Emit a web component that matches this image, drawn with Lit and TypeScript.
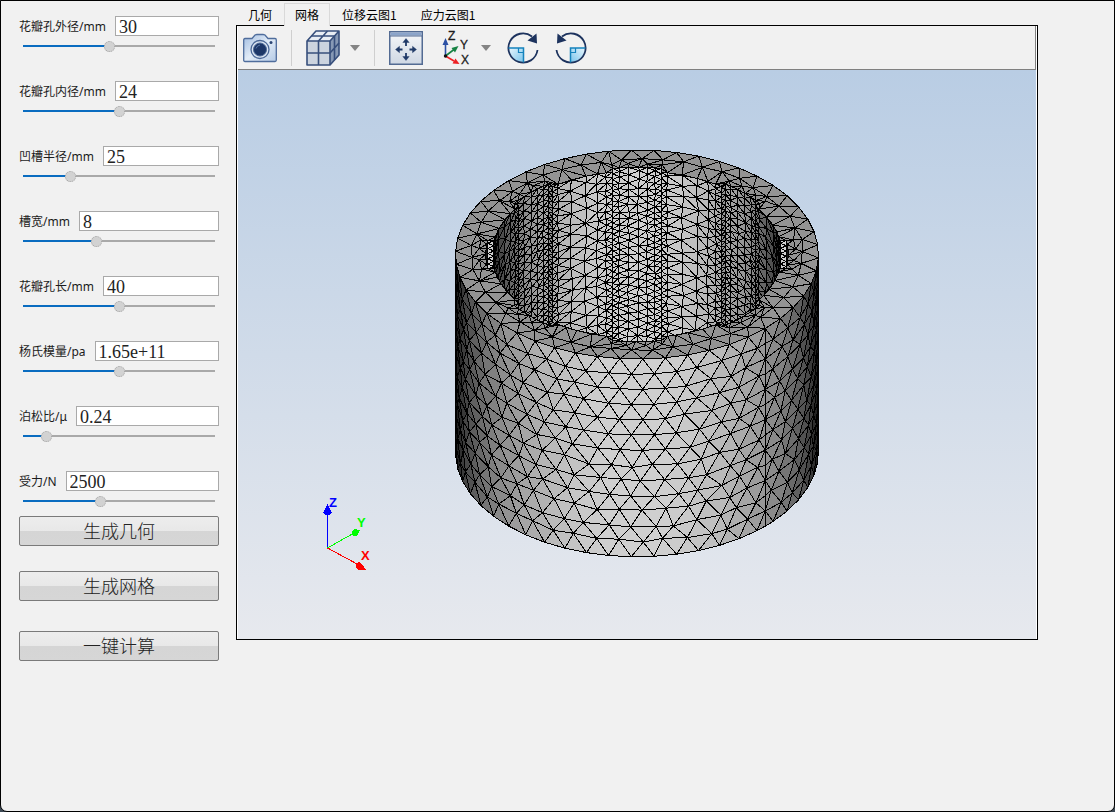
import { LitElement, html, svg, css } from "lit";
import { customElement, property, state } from "lit/decorators.js";
import { styleMap } from "lit/directives/style-map.js";

/* ---------- geometry of the meshed sleeve ---------- */

type Pt = [number, number];
type Tri = [number, number, number];

const UNIT = 6.05;
const TILT = 0.576;
const RISE = 0.817;
const CX = 637;
const CY = 254.5;
const OUTER = 30;
const INNER = 24;
const GROOVE = 25;
const HALF = 4;
const HEIGHT = 40;
const DEG = Math.PI / 180;

function randomSource(seed: number) {
  let s = seed;
  return () => {
    s = (s * 1664525 + 1013904223) % 4294967296;
    return s / 4294967296 - 0.5;
  };
}

function project(x: number, y: number, depth: number): Pt {
  return [CX + UNIT * x, CY - UNIT * TILT * y + UNIT * RISE * depth];
}

/* Bowyer-Watson triangulation; a tiny perturbation avoids cocircular ties. */
function triangulate(src: Pt[]): Tri[] {
  const rnd = randomSource(77);
  const p: Pt[] = src.map(([x, y]) => [x + rnd() * 0.002, y + rnd() * 0.002]);
  const n = p.length;
  p.push([-4000, -4000], [4000, -4000], [0, 6000]);
  type Cell = { t: Tri; x: number; y: number; r: number };
  const cell = (a: number, b: number, c: number): Cell => {
    const [ax, ay] = p[a];
    const bx = p[b][0] - ax, by = p[b][1] - ay;
    const cx = p[c][0] - ax, cy = p[c][1] - ay;
    const d = 2 * (bx * cy - by * cx) || 1e-12;
    const ux = (cy * (bx * bx + by * by) - by * (cx * cx + cy * cy)) / d;
    const uy = (bx * (cx * cx + cy * cy) - cx * (bx * bx + by * by)) / d;
    return { t: [a, b, c], x: ax + ux, y: ay + uy, r: ux * ux + uy * uy };
  };
  let cells: Cell[] = [cell(n, n + 1, n + 2)];
  for (let i = 0; i < n; i++) {
    const [x, y] = p[i];
    const edges = new Map<string, [number, number] | null>();
    const keep: Cell[] = [];
    for (const c of cells) {
      const dx = c.x - x, dy = c.y - y;
      if (dx * dx + dy * dy >= c.r) {
        keep.push(c);
        continue;
      }
      for (const [a, b] of [[c.t[0], c.t[1]], [c.t[1], c.t[2]], [c.t[2], c.t[0]]]) {
        const key = a < b ? `${a}_${b}` : `${b}_${a}`;
        edges.set(key, edges.has(key) ? null : [a, b]);
      }
    }
    for (const e of edges.values()) if (e) keep.push(cell(e[0], e[1], i));
    cells = keep;
  }
  return cells
    .map((c) => c.t)
    .filter(([a, b, c]) => {
      if (a >= n || b >= n || c >= n) return false;
      const area = (src[b][0] - src[a][0]) * (src[c][1] - src[a][1]) -
        (src[b][1] - src[a][1]) * (src[c][0] - src[a][0]);
      return Math.abs(area) > 0.02;
    });
}

const trianglePath = (q: Pt[]) =>
  "M" + q.map(([x, y]) => `${x.toFixed(1)} ${y.toFixed(1)}`).join("L") + "Z";

interface Face { d: string; fill: string }

function grey(v: number) {
  const g = Math.max(0, Math.min(255, Math.round(v / 3) * 3));
  return `rgb(${g},${g},${g})`;
}

function gather(list: { q: Pt[]; shade: number }[]): Face[] {
  const map = new Map<string, string>();
  for (const { q, shade } of list) {
    const key = grey(shade);
    map.set(key, (map.get(key) ?? "") + trianglePath(q));
  }
  return [...map].map(([fill, d]) => ({ fill, d }));
}

/* Graded stations along a length: fine at both ends, coarse in the middle. */
function stations(length: number, fine: number, coarse: number): number[] {
  const out = [0];
  let s = 0;
  for (;;) {
    const edge = Math.min(s, length - s) / (length / 2);
    s += fine + (coarse - fine) * Math.max(0, edge);
    if (s >= length - fine * 0.4) break;
    out.push(s);
  }
  out.push(length);
  const last = out[out.length - 2];
  const stretch = (length - fine) / last;
  return out.map((v, i) => (i < out.length - 1 && out.length > 3 ? v * stretch : v));
}

interface Strip {
  length: number;
  at: (s: number) => Pt;
  normal: (s: number) => Pt;
  fine: number;
  coarse: number;
}

function innerStrips(): Strip[] {
  const strips: Strip[] = [];
  const aIn = Math.asin(HALF / INNER);
  const aOut = Math.asin(HALF / GROOVE);
  const arc = (r: number, from: number, to: number, fine: number, coarse: number): Strip => ({
    length: r * (to - from),
    at: (s) => [r * Math.cos(from + s / r), r * Math.sin(from + s / r)],
    normal: (s) => [-Math.cos(from + s / r), -Math.sin(from + s / r)],
    fine,
    coarse,
  });
  const wall = (a: Pt, b: Pt, nrm: Pt): Strip => {
    const length = Math.hypot(b[0] - a[0], b[1] - a[1]);
    return {
      length,
      at: (s) => [a[0] + ((b[0] - a[0]) * s) / length, a[1] + ((b[1] - a[1]) * s) / length],
      normal: () => nrm,
      fine: 1,
      coarse: 1,
    };
  };
  const polar = (r: number, a: number): Pt => [r * Math.cos(a), r * Math.sin(a)];
  for (let k = 0; k < 8; k++) {
    const m = k * 45 * DEG;
    strips.push(wall(polar(INNER, m - aIn), polar(GROOVE, m - aOut), [-Math.sin(m), Math.cos(m)]));
    strips.push(arc(GROOVE, m - aOut, m + aOut, 1.05, 1.7));
    strips.push(wall(polar(GROOVE, m + aOut), polar(INNER, m + aIn), [Math.sin(m), -Math.cos(m)]));
    strips.push(arc(INNER, m + aIn, m + 45 * DEG - aIn, 1.05, 2.9));
  }
  return strips;
}

function buildInner(strips: Strip[]): Face[] {
  const rnd = randomSource(11);
  const sorted = strips
    .map((st) => ({ st, y: st.at(st.length / 2)[1] }))
    .sort((a, b) => b.y - a.y);
  const faces: Face[] = [];
  for (const { st } of sorted) {
    if (st.normal(st.length / 2)[1] > -0.01 && st.at(st.length / 2)[1] < 5) continue;
    const cols = stations(st.length, st.fine, st.coarse);
    const pts: Pt[] = [];
    cols.forEach((s, i) => {
      const edge = i === 0 || i === cols.length - 1;
      const gap = edge
        ? st.fine * 1.05
        : st.fine + (st.coarse - st.fine) * Math.min(s, st.length - s) / (st.length / 2);
      const rows = Math.round(HEIGHT / gap);
      const shift = i % 2 ? 0.5 : 0;
      for (let r = 0; r <= rows + (shift ? 1 : 0); r++) {
        let z = ((r - shift) * HEIGHT) / rows;
        z = Math.max(0, Math.min(HEIGHT, z));
        const inside = !edge && z > 0 && z < HEIGHT;
        pts.push([s + (inside ? rnd() * gap * 0.22 : 0), z + (inside ? rnd() * gap * 0.22 : 0)]);
      }
    });
    const list: { q: Pt[]; shade: number }[] = [];
    for (const t of triangulate(pts)) {
      const s = (pts[t[0]][0] + pts[t[1]][0] + pts[t[2]][0]) / 3;
      const facing = -st.normal(s)[1] * RISE;
      if (facing <= 0) continue;
      list.push({
        q: t.map((i) => project(...st.at(pts[i][0]), pts[i][1])) as Pt[],
        shade: 255 * facing,
      });
    }
    faces.push(...gather(list));
  }
  return faces;
}

function buildOuter(): Face[] {
  const rnd = randomSource(5);
  const rows = 13;
  const step = 7.2 * DEG;
  const list: { q: Pt[]; shade: number }[] = [];
  const seam = 315 * DEG;
  for (const [dir, count] of [[-1, 20], [1, 8]]) {
    const pts: Pt[] = [];
    for (let r = 0; r <= rows; r++) {
      const z = (r * HEIGHT) / rows;
      const half = r % 2 ? 0.5 : 0;
      if (half) pts.push([0, z]);
      for (let c = 0; c <= count; c++) {
        const u = c + half;
        const inner = r > 0 && r < rows && u > 0;
        const centre = dir < 0 && Math.abs(u - 6.2) < 2.2 && r < 7;
        const j = inner ? (centre ? 0.03 : 0.3) : 0;
        pts.push([(u + rnd() * j) * 3.77, z + rnd() * j * 3]);
      }
    }
    for (const t of triangulate(pts)) {
      const ang = (i: number) => seam + dir * (pts[i][0] / 3.77) * step;
      const mid = (ang(t[0]) + ang(t[1]) + ang(t[2])) / 3;
      const facing = -Math.sin(mid) * RISE;
      if (facing <= 0) continue;
      list.push({
        q: t.map((i) => project(OUTER * Math.cos(ang(i)), OUTER * Math.sin(ang(i)), pts[i][1])) as Pt[],
        shade: 255 * facing,
      });
    }
  }
  return gather(list);
}

function buildRing(strips: Strip[]): Face[] {
  const rnd = randomSource(21);
  const pts: Pt[] = [];
  for (let i = 0; i < 50; i++) {
    const a = (315 + i * 7.2) * DEG;
    pts.push([OUTER * Math.cos(a), OUTER * Math.sin(a)]);
    const b = a + 3.6 * DEG;
    const r = 27.4 + rnd() * 0.7;
    pts.push([r * Math.cos(b), r * Math.sin(b)]);
  }
  strips.forEach((st) => {
    const cols = stations(st.length, st.fine, st.coarse);
    for (let i = 0; i < cols.length - 1; i++) {
      const [x, y] = st.at(cols[i]);
      pts.push([x, y]);
      const bend = Math.abs(Math.hypot(x, y) - GROOVE) < 0.01;
      if (bend && i % 2 === 0) {
        const k = (GROOVE + 1.1 + rnd() * 0.3) / GROOVE;
        pts.push([x * k, y * k]);
      }
    }
  });
  const aOut = Math.asin(HALF / GROOVE) / DEG;
  const list: { q: Pt[]; shade: number }[] = [];
  for (const t of triangulate(pts)) {
    const x = (pts[t[0]][0] + pts[t[1]][0] + pts[t[2]][0]) / 3;
    const y = (pts[t[0]][1] + pts[t[1]][1] + pts[t[2]][1]) / 3;
    const a = ((Math.atan2(y, x) / DEG + 360 + 22.5) % 45) - 22.5;
    const bound = Math.abs(a) < aOut + 0.2 ? GROOVE - 0.06 : INNER - 0.14;
    if (Math.hypot(x, y) < bound) continue;
    list.push({ q: t.map((i) => project(pts[i][0], pts[i][1], 0)) as Pt[], shade: 147 });
  }
  return gather(list);
}

function contour(strips: Strip[]): string {
  const pts: Pt[] = [];
  for (const st of strips) {
    for (let i = 0; i < 8; i++) pts.push(project(...st.at((st.length * i) / 8), 0));
  }
  return trianglePath(pts);
}

const STRIPS = innerStrips();
const INNER_FACES = buildInner(STRIPS);
const OUTER_FACES = buildOuter();
const RING_FACES = buildRing(STRIPS);
const HOLE = contour(STRIPS);

/* ---------- one parameter: label, text box and slider ---------- */

@customElement("param-field")
class ParamField extends LitElement {
  static styles = css`
    :host { display: block; }
    .line { display: flex; align-items: center; gap: 9px; height: 20px; }
    .name {
      padding-top: 2px;
      font: 12px/20px "Noto Sans", "Noto Sans CJK SC", sans-serif;
      color: #1b1b1b;
      white-space: nowrap;
    }
    .box {
      flex: 1;
      min-width: 0;
      height: 20px;
      box-sizing: border-box;
      border: 1px solid #a9a9a9;
      border-radius: 0;
      padding: 2px 3px 0;
      background: #fff;
      color: #222;
      font: 18px/18px "Liberation Serif", serif;
      outline: none;
    }
    .slider {
      appearance: none;
      -webkit-appearance: none;
      display: block;
      margin: 4px 4px 0;
      width: calc(100% - 8px);
      height: 12px;
      background: linear-gradient(#0a6cc0, #0a6cc0) 0 5px / var(--fill) 2px no-repeat,
        linear-gradient(#a9a9a9, #a9a9a9) 0 5px / 100% 2px no-repeat;
      outline: none;
    }
    .slider::-webkit-slider-thumb {
      -webkit-appearance: none;
      width: 11px;
      height: 11px;
      border-radius: 50%;
      background: #d2d2d2;
      border: 1px dotted #a4a4a4;
    }
  `;

  @property() label = "";
  @property() value = "";
  @property({ type: Number }) min = 0;
  @property({ type: Number }) max = 100;

  private onInput(e: Event) {
    this.value = (e.target as HTMLInputElement).value;
  }

  render() {
    const share = (Number(this.value) - this.min) / (this.max - this.min);
    return html`
      <div class="line">
        <label class="name" for="box">${this.label}</label>
        <input class="box" id="box" type="text" .value=${this.value} @change=${this.onInput} />
      </div>
      <input
        class="slider"
        type="range"
        aria-label=${this.label}
        min=${this.min}
        max=${this.max}
        step="any"
        .value=${this.value}
        style=${styleMap({ "--fill": `${(share * 100).toFixed(2)}%` })}
        @input=${this.onInput}
      />
    `;
  }
}

/* ---------- the 3D view ---------- */

@customElement("mesh-view")
class MeshView extends LitElement {
  static styles = css`
    :host { display: block; }
    .scene {
      display: block;
      width: 100%;
      height: auto;
      background: linear-gradient(#b9cde4, #e7e9ee);
    }
    .face { stroke: #000; stroke-width: 1; stroke-linejoin: round; }
    .axis { font: bold 13px "Liberation Sans", sans-serif; }
  `;

  private faces(list: Face[]) {
    return list.map((f) => svg`<path class="face" d=${f.d} fill=${f.fill}></path>`);
  }

  render() {
    return html`
      <svg class="scene" viewBox="238 70 798 569" role="img" aria-label="网格">
        <defs><clipPath id="hole"><path d=${HOLE}></path></clipPath></defs>
        <g shape-rendering="crispEdges">
          <g clip-path="url(#hole)">
            <path d=${HOLE} fill="#111"></path>
            ${this.faces(INNER_FACES)}
          </g>
          ${this.faces(OUTER_FACES)}
          ${this.faces(RING_FACES)}
        </g>
        <g shape-rendering="crispEdges">
          <path d="M327.5 548V512" stroke="#00f"></path>
          <path d="M327.5 548L354 533" stroke="#0f0"></path>
          <path d="M327.5 548L359 565" stroke="#f00"></path>
          <path d="M327.5 504L332 513Q328 517 323 513Z" fill="#00f"></path>
          <path d="M360 530L357 536Q352 537 351.500 532L354 529Z" fill="#0f0"></path>
          <path d="M366 569.500L360 562Q355 562 356 567L358 570Z" fill="#f00"></path>
        </g>
        <text class="axis" x="329" y="507" fill="#00f">Z</text>
        <text class="axis" x="357" y="527" fill="#0f0">Y</text>
        <text class="axis" x="361" y="560" fill="#f00">X</text>
      </svg>
    `;
  }
}

/* ---------- toolbar ---------- */

@customElement("view-toolbar")
class ViewToolbar extends LitElement {
  static styles = css`
    :host {
      display: flex;
      align-items: center;
      gap: 14px;
      height: 43px;
      padding: 0 5px;
      border: solid #808080;
      border-width: 0 1px 1px 0;
      background: #f1f1f1;
    }
    .group { display: flex; align-items: center; gap: 16px; }
    .tight { gap: 10px; }
    .near { gap: 8px; }
    .tool {
      display: block;
      margin: 0;
      padding: 0;
      border: 0;
      background: none;
      line-height: 0;
    }
    .rule { width: 1px; height: 36px; background: #cfcfcf; }
    .letter { font: 12px "Liberation Sans", sans-serif; fill: #1c1c1c; stroke: #1c1c1c; stroke-width: 0.3; }
  `;

  private arrow(name: string) {
    return html`<button class="tool" aria-label=${name}>
      <svg width="10" height="6" viewBox="0 0 10 6"><path d="M0 0H10L5 6Z" fill="#848484" /></svg>
    </button>`;
  }

  render() {
    return html`
      <button class="tool" aria-label="截图">
        <svg width="34" height="34" viewBox="0 0 34 34">
          <defs>
            <linearGradient id="cam" x1="0" y1="0" x2="1" y2="1">
              <stop offset="0" stop-color="#9fbbe0" /><stop offset=".5" stop-color="#e2ecf7" />
              <stop offset="1" stop-color="#b4cae6" />
            </linearGradient>
          </defs>
          <path d="M2 7.500H9L12 4Q13 3.500 14 3.500H20Q21 3.500 22 4L25 7.500H32Q33.300 7.500 33.300 9V29Q33.300 30.500 32 30.500H2Q.7 30.500 .7 29V9Q.7 7.500 2 7.500Z" fill="url(#cam)" stroke="#4f6d9c" stroke-width="1.300" />
          <circle cx="17" cy="18.500" r="9" fill="#dbe5f1" stroke="#4a6796" stroke-width="1.300" />
          <circle cx="17" cy="18.500" r="6.500" fill="#1d3767" stroke="#4a6796" stroke-width="1" />
          <path d="M13 17.500Q14 14.500 17 14" fill="none" stroke="#5877a8" />
          <circle cx="28" cy="11.500" r="1.500" fill="#2c4674" />
        </svg>
      </button>
      <span class="rule"></span>
      <span class="group tight">
        <button class="tool" aria-label="视图">
          <svg width="34" height="36" viewBox="0 0 34 36">
            <path d="M1 11L10 1H33L24 11Z" fill="#e8edf4" />
            <path d="M1 11H24V35H1Z" fill="#ccd4df" />
            <path d="M24 11L33 1V25L24 35Z" fill="#8799b5" />
            <g fill="none" stroke="#374f7c" stroke-width="1.600" stroke-linejoin="round">
              <path d="M1 11L10 1H33V25L24 35H1ZM1 11H24V35M24 11L33 1" />
              <path d="M12.500 35V11L21.500 1M5.500 6H28.500V30M1 23H24L33 13" />
            </g>
          </svg>
        </button>
        ${this.arrow("视图选项")}
      </span>
      <span class="rule"></span>
      <span class="group">
        <button class="tool" aria-label="适应窗口">
          <svg width="34" height="34" viewBox="0 0 34 34">
            <defs>
              <linearGradient id="fit" x1="0" y1="0" x2="0" y2="1">
                <stop offset="0" stop-color="#f6f7f9" /><stop offset="1" stop-color="#cfd8e4" />
              </linearGradient>
            </defs>
            <rect x=".75" y=".75" width="32.500" height="32.500" fill="url(#fit)" stroke="#536b93" stroke-width="1.500" />
            <rect x="1.500" y="1.500" width="31" height="3" fill="#8ba4ca" />
            <path d="M1 5H33" stroke="#536b93" />
            <g stroke="#203a68" stroke-width="1.800" fill="#203a68">
              <path d="M17 15V11M17 22V26M13.500 18.500H9M20.500 18.500H25" />
              <path d="M17 7.500L13.800 11.500H20.200ZM17 29.500L13.800 25.500H20.200ZM6.500 18.500L10.500 15.300V21.700ZM27.500 18.500L23.500 15.300V21.700Z" stroke-width=".4" />
            </g>
          </svg>
        </button>
        <span class="group near">
          <button class="tool" aria-label="坐标轴">
            <svg width="34" height="36" viewBox="0 0 34 36">
              <path d="M6.500 26V13" stroke="#2c50a4" stroke-width="1.600" />
              <path d="M6.500 8L3.500 15H9.500Z" fill="#2c50a4" />
              <path d="M6.500 26L15 19.500" stroke="#168243" stroke-width="1.600" />
              <path d="M19.500 16L12.500 18L16 22.500Z" fill="#168243" />
              <path d="M6.500 26L15 31" stroke="#ed2024" stroke-width="1.600" />
              <path d="M20.500 34L13.500 33.500L16.500 28.500Z" fill="#ed2024" />
              <circle cx="6.500" cy="26" r="1.700" fill="#111" />
              <text class="letter" x="9" y="10">Z</text>
              <text class="letter" x="21" y="19">Y</text>
              <text class="letter" x="22" y="34">X</text>
            </svg>
          </button>
          ${this.arrow("坐标轴选项")}
        </span>
        ${this.turn("顺时针旋转", false)}
        ${this.turn("逆时针旋转", true)}
      </span>
    `;
  }

  private turn(name: string, left: boolean) {
    return html`<button class="tool" aria-label=${name}>
      <svg width="32" height="32" viewBox="-16 -16 32 32">
        <defs>
          <linearGradient id="quad" x1="0" y1="0" x2="1" y2="1">
            <stop offset="0" stop-color="#e8f6fd" /><stop offset="1" stop-color="#7cc6ec" />
          </linearGradient>
        </defs>
        <g transform=${left ? "scale(-1 1)" : "scale(1 1)"}>
          <path d="M-14 0H0V14A14 14 0 0 1 -14 0Z" fill="url(#quad)" />
          <path d="M14.500 2A14.600 14.600 0 1 1 9 -11.500" fill="none" stroke="#1d335e" stroke-width="1.800" />
          <path d="M-14.500 0H.5V14.500" fill="none" stroke="#1583bd" stroke-width="1.500" />
          <path d="M-4.500 0V4.500H0" fill="none" stroke="#1583bd" stroke-width="1.200" />
          <path d="M4.500 -7.500L13.500 -14.500L14 -4.500Z" fill="#1d335e" />
        </g>
      </svg>
    </button>`;
  }
}

/* ---------- application window ---------- */

@customElement("app-root")
class AppRoot extends LitElement {
  static styles = css`
    :host { display: block; background: #3c4854; }
    .window {
      display: flex;
      align-items: flex-start;
      gap: 17px;
      box-sizing: border-box;
      min-height: 100vh;
      padding: 2px 76px 0 18px;
      border: 1px solid #000;
      border-radius: 0 0 7px 7px;
      background: #f1f1f1;
    }
    .side { flex: none; width: 200px; padding-top: 13px; }
    .params { display: grid; grid-template-columns: minmax(0, 1fr); gap: 29px; }
    .actions { display: grid; gap: 25px; padding-top: 9px; }
    .action {
      height: 30px;
      padding: 0 0 2px;
      border: 1px solid #7a7a7a;
      border-radius: 2px;
      background: linear-gradient(#ededed, #e8e8e8 50%, #d5d5d5 50%, #d6d6d6);
      color: #222;
      font: 300 18px/26px "Noto Sans CJK SC", sans-serif;
    }
    .action:last-child { margin-top: 5px; }
    .main { flex: 1; min-width: 0; }
    .tabs { display: flex; height: 22px; }
    .tab {
      box-sizing: border-box;
      height: 23px;
      padding: 0 11px;
      border: 1px solid transparent;
      border-bottom: 0;
      background: none;
      color: #000;
      font: 12px/22px "Noto Sans CJK SC", sans-serif;
      white-space: nowrap;
    }
    .tab.on {
      position: relative;
      padding: 0 10px;
      border-color: #d9d9d9;
      background: #f1f1f1;
    }
    .pane { border: 1px solid #000; padding: 0 1px; background: #fff; }
  `;

  @state() private tab = 1;

  private tabs = ["几何", "网格", "位移云图1", "应力云图1"];
  private params = [
    { label: "花瓣孔外径/mm", value: "30", min: 21, max: 41 },
    { label: "花瓣孔内径/mm", value: "24", min: 14, max: 34 },
    { label: "凹槽半径/mm", value: "25", min: 22, max: 35 },
    { label: "槽宽/mm", value: "8", min: 5, max: 13 },
    { label: "花瓣孔长/mm", value: "40", min: 20, max: 60 },
    { label: "杨氏模量/pa", value: "1.65e+11", min: 1.45e11, max: 1.85e11 },
    { label: "泊松比/μ", value: "0.24", min: 0.2, max: 0.6 },
    { label: "受力/N", value: "2500", min: 500, max: 5500 },
  ];
  private actions = ["生成几何", "生成网格", "一键计算"];

  render() {
    return html`
      <div class="window">
        <aside class="side">
          <div class="params">
            ${this.params.map(
              (p) => html`<param-field label=${p.label} value=${p.value} min=${p.min} max=${p.max}></param-field>`
            )}
          </div>
          <div class="actions">
            ${this.actions.map((a) => html`<button class="action">${a}</button>`)}
          </div>
        </aside>
        <main class="main">
          <div class="tabs" role="tablist">
            ${this.tabs.map(
              (t, i) => html`<button
                class="tab ${i === this.tab ? "on" : ""}"
                role="tab"
                aria-selected=${i === this.tab}
                @click=${() => (this.tab = i)}
              >${t}</button>`
            )}
          </div>
          <div class="pane">
            <view-toolbar></view-toolbar>
            <mesh-view></mesh-view>
          </div>
        </main>
      </div>
    `;
  }
}
